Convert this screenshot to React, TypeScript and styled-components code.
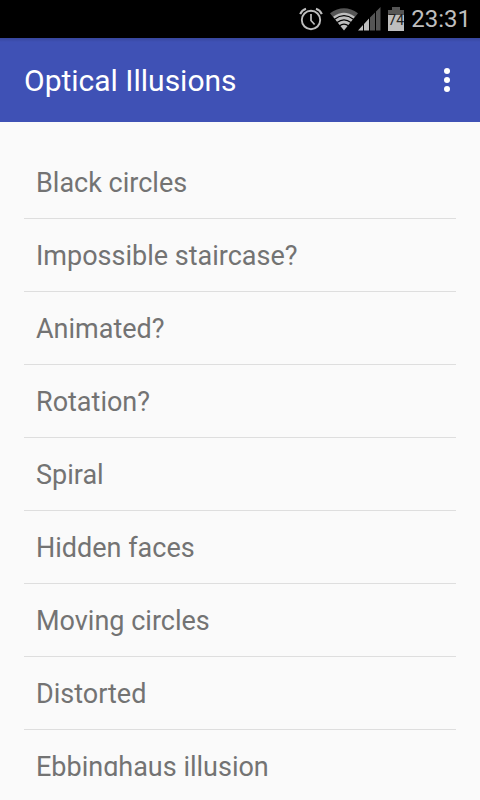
import React from "react";
import styled, { createGlobalStyle } from "styled-components";

const GlobalStyle = createGlobalStyle`
  * { box-sizing: border-box; }
  body { margin: 0; background: #fafafa; font-family: Roboto, sans-serif; }
`;

const Screen = styled.div`
  display: flex;
  flex-direction: column;
  height: 100vh;
  overflow: hidden;
`;

const StatusBar = styled.div`
  display: flex;
  flex: none;
  align-items: center;
  justify-content: flex-end;
  height: 38px;
  padding-right: 9px;
  background: #000;
  color: #bebebe;
`;

const StatusIcons = styled.div`
  display: flex;
  align-items: center;
  gap: 7px;
`;

const Signals = styled.div`
  display: flex;
`;

const Battery = styled.div`
  position: relative;
  display: flex;
  width: 16px;
  height: 24px;
`;

const BatteryLevel = styled.span`
  position: absolute;
  inset: 0;
  color: #222;
  font-size: 14px;
  line-height: 26px;
  text-align: center;
`;

const Clock = styled.time`
  margin-left: 7px;
  font-size: 24px;
  line-height: 38px;
`;

const AppBar = styled.header`
  display: flex;
  flex: none;
  align-items: center;
  justify-content: space-between;
  height: 84px;
  padding: 0 12px 0 24px;
  background: linear-gradient(#37469d, #3f51b5 4px);
  color: #fff;
`;

const Title = styled.h1`
  margin: 0;
  padding-top: 2px;
  font-size: 30px;
  font-weight: 400;
  line-height: 36px;
`;

const MenuButton = styled.button`
  display: flex;
  align-items: center;
  justify-content: center;
  width: 42px;
  height: 48px;
  padding: 0;
  border: 0;
  background: none;
  color: inherit;
`;

const List = styled.ul`
  flex: 1;
  min-height: 0;
  margin: 24px;
  padding: 0;
  overflow: hidden;
  list-style: none;
`;

const Row = styled.li`
  border-bottom: 1px solid #dedede;
`;

const RowLink = styled.a`
  display: block;
  padding: 2px 12px 0;
  color: #737373;
  font-size: 27px;
  line-height: 70px;
  text-decoration: none;
`;

const AlarmIcon = () => (
  <svg width="24" height="24" viewBox="0 0 24 24" fill="none" stroke="currentColor" aria-hidden="true">
    <circle cx="12" cy="13" r="9.2" strokeWidth="1.9" />
    <path d="M12 7v6.500l3.6 4" strokeWidth="1.7" />
    <path d="M1.200 7.2Q2.800 3.200 7 1.800M22.800 7.2Q21.200 3.200 17 1.800" strokeWidth="2.1" />
  </svg>
);

const WifiIcon = () => (
  <svg width="28" height="24" viewBox="0 0 28 24" fill="none" aria-hidden="true">
    <path d="M0 6.200Q14-3.500 28 6.200L25 10Q14 2.500 3 10Z" fill="#555" />
    <path d="M3 9.800Q14 1.500 25 9.800L14 23.500Z" fill="currentColor" />
    <path d="M4.500 12.200Q14 5 23.500 12.200M7 15.500Q14 10.200 21 15.500M9.500 18.800Q14 15.400 18.500 18.800" stroke="#000" strokeWidth="1.2" />
  </svg>
);

const SignalIcon = () => (
  <svg width="23" height="24" viewBox="0 0 23 24" aria-hidden="true">
    <path d="M0 23.500L5 18v5.500zM6 23.500V17l5-5.500v12z" fill="currentColor" />
    <path d="M12 23.500V10.500l5-5v18zM18 23.500V4.500L22.500 0v23.500z" fill="#555" />
  </svg>
);

const BatteryIcon = () => (
  <svg width="16" height="24" viewBox="0 0 16 24" aria-hidden="true">
    <path d="M4 0h8v3h4v5H0V3h4z" fill="#555" />
    <path d="M0 8h16v16H0z" fill="currentColor" />
  </svg>
);

const illusions = [
  "Black circles", "Impossible staircase?", "Animated?", "Rotation?", "Spiral",
  "Hidden faces", "Moving circles", "Distorted", "Ebbinghaus illusion",
];

export default function App() {
  return (
    <Screen>
      <GlobalStyle />
      <StatusBar>
        <StatusIcons>
          <AlarmIcon />
          <Signals><WifiIcon /><SignalIcon /></Signals>
          <Battery><BatteryIcon /><BatteryLevel>74</BatteryLevel></Battery>
        </StatusIcons>
        <Clock>23:31</Clock>
      </StatusBar>
      <AppBar>
        <Title>Optical Illusions</Title>
        <MenuButton aria-label="More options">
          <svg width="8" height="26" viewBox="0 0 8 26" fill="currentColor">
            <circle cx="4" cy="4" r="3" /><circle cx="4" cy="13" r="3" /><circle cx="4" cy="22" r="3" />
          </svg>
        </MenuButton>
      </AppBar>
      <List>
        {illusions.map((name) => (
          <Row key={name}><RowLink href="#">{name}</RowLink></Row>
        ))}
      </List>
    </Screen>
  );
}
